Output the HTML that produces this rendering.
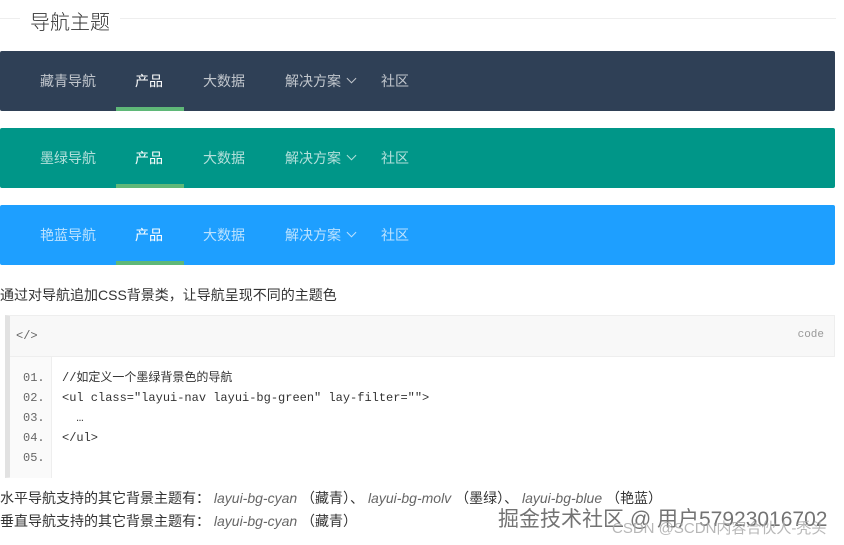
<!DOCTYPE html>
<html><head><meta charset="utf-8"><style>
body{margin:0;width:844px;height:545px;overflow:hidden;background:#fff;font-family:"Liberation Sans","Noto Sans CJK SC",sans-serif;color:#333;position:relative}
.a{position:absolute}
.line{position:absolute;top:18px;height:1px;background:#eee}
.nav{position:absolute;left:0;width:835px;height:60px;border-radius:2px;font-size:14px;color:rgba(255,255,255,.7)}
.nav span{position:absolute;top:21px;line-height:18px}
.nav .on{color:#fff}
.nav .bar{position:absolute;left:116px;width:68px;bottom:0;height:4px;background:#5FB878}
.arr{position:absolute;left:348px;top:24px;width:6px;height:6px;border-right:1px solid rgba(255,255,255,.7);border-bottom:1px solid rgba(255,255,255,.7);transform:rotate(45deg)}
.code{position:absolute;box-sizing:border-box;left:5px;top:315px;width:830px;height:163px;border:1px solid #eee;border-left:5px solid #e2e2e2;background:#f8f8f8}
.mono{font-family:"Liberation Mono","Noto Sans CJK SC",monospace;font-size:12px}
</style></head><body>
<div class="line" style="left:0;width:20px"></div>
<div class="line" style="left:120px;width:716px"></div>
<div class="a" style="left:30px;top:6px;font-size:20px;font-weight:300;color:#333">导航主题</div>

<div class="nav" style="top:51px;background:#2F4056"><span style="left:40px">藏青导航</span><span class="on" style="left:135px">产品</span><span style="left:203px">大数据</span><span style="left:285px">解决方案</span><div class="arr"></div><span style="left:381px">社区</span><div class="bar"></div></div>
<div class="nav" style="top:128px;background:#009688"><span style="left:40px">墨绿导航</span><span class="on" style="left:135px">产品</span><span style="left:203px">大数据</span><span style="left:285px">解决方案</span><div class="arr"></div><span style="left:381px">社区</span><div class="bar"></div></div>
<div class="nav" style="top:205px;background:#1E9FFF"><span style="left:40px">艳蓝导航</span><span class="on" style="left:135px">产品</span><span style="left:203px">大数据</span><span style="left:285px">解决方案</span><div class="arr"></div><span style="left:381px">社区</span><div class="bar"></div></div>

<div class="a" style="left:0;top:285px;font-size:14px;color:#333">通过对导航追加CSS背景类，让导航呈现不同的主题色</div>

<div class="code">
 <div class="a mono" style="left:6px;top:13px;color:#666">&lt;/&gt;</div>
 <div class="a mono" style="right:10px;top:13px;color:#999;font-size:11px">code</div>
 <div class="a" style="left:0;top:40px;width:824px;height:121px;background:#fafafa;border-top:1px solid #eee"></div>
 <div class="a" style="left:41px;top:40px;width:783px;height:121px;background:#fff;border-left:1px solid #eee;border-top:1px solid #eee"></div>
 <div class="a mono" style="left:13px;top:52px;line-height:20px;color:#666">01.<br>02.<br>03.<br>04.<br>05.</div>
 <div class="a mono" style="left:52px;top:52px;line-height:20px;color:#333;white-space:pre">//如定义一个墨绿背景色的导航
&lt;ul class="layui-nav layui-bg-green" lay-filter=""&gt;
  …
&lt;/ul&gt;</div>
</div>

<div class="a" style="left:0;top:487px;font-size:14px;line-height:23px;color:#333;white-space:pre">水平导航支持的其它背景主题有： <i style="color:#666">layui-bg-cyan</i> （藏青）、 <i style="color:#666">layui-bg-molv</i> （墨绿）、 <i style="color:#666">layui-bg-blue</i> （艳蓝）
垂直导航支持的其它背景主题有： <i style="color:#666">layui-bg-cyan</i> （藏青）</div>
<div class="a" style="left:498px;top:503px;font-size:21px;color:rgba(80,80,80,.8);text-shadow:0 0 1px #fff">掘金技术社区 @ 用户57923016702</div>
<div class="a" style="left:612px;top:517px;font-size:15px;color:rgba(170,170,170,.85)">CSDN @SCDN内容合伙人-秃头</div>
</body></html>
